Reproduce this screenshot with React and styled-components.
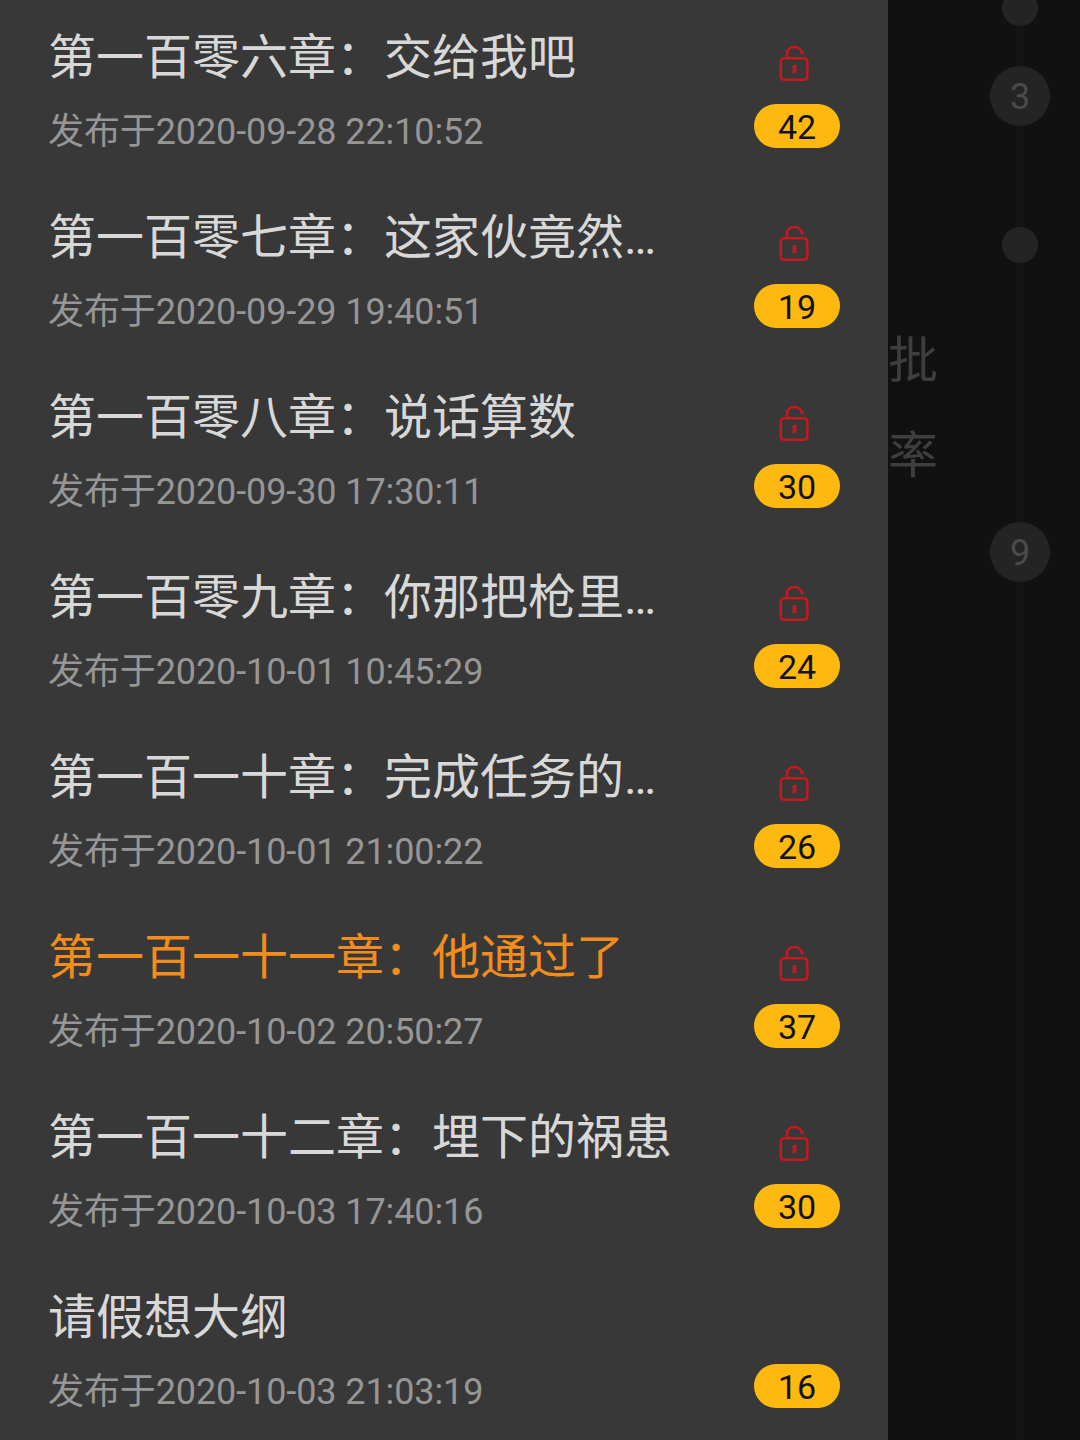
import React from 'react'
import styled, { createGlobalStyle } from 'styled-components'

const GlobalStyle = createGlobalStyle`
    html, body {
        margin: 0;
        padding: 0;
        background: #111111;
    }
`

const Page = styled.div`
    display: flex;
    width: 1080px;
    height: 1440px;
    overflow: hidden;
    background: #111111;
    font-family: Roboto, "Noto Sans CJK SC", sans-serif;
`

const Drawer = styled.div`
    flex: none;
    width: 888px;
    height: 1440px;
    overflow: hidden;
    background: #383838;
`

const ChapterList = styled.ul`
    list-style: none;
    margin: -32px 0 0;
    padding: 0;
`

const ChapterRow = styled.li`
    display: flex;
    align-items: stretch;
    justify-content: space-between;
    height: 180px;
    padding: 0 48px;
    box-sizing: border-box;
`

const ChapterText = styled.div`
    display: flex;
    flex-direction: column;
    padding-top: 54px;
`

const ChapterTitle = styled.div`
    font-size: 48px;
    line-height: 72px;
    white-space: nowrap;
    color: ${({ $current }) => ($current ? '#f28c1c' : '#d8d8d8')};
`

const ChapterDate = styled.div`
    margin-top: 16px;
    font-size: 36px;
    line-height: 44px;
    letter-spacing: -0.1px;
    white-space: nowrap;
    color: #969696;
`

const ChapterSide = styled.div`
    display: flex;
    flex-direction: column;
    align-items: center;
    justify-content: flex-end;
    width: 86px;
`

const LockIcon = styled.svg`
    display: block;
    width: 32px;
    height: 38px;
    margin: 0 7px 22px 0;
    fill: none;
    stroke: #c41a1e;
    stroke-width: 2.6;
`

const CoinBadge = styled.div`
    width: 86px;
    height: 44px;
    border-radius: 22px;
    background: #fdb90f;
    color: #111111;
    font-size: 34px;
    line-height: 47px;
    text-align: center;
`

const Backdrop = styled.div`
    flex: 1;
    display: flex;
    height: 1440px;
`

const LabelColumn = styled.div`
    flex: none;
    width: 102px;
    padding-top: 327px;
`

const StepLabel = styled.div`
    height: 95px;
    font-size: 50px;
    line-height: 68px;
    color: #3e3e3e;
`

const Track = styled.div`
    flex: none;
    width: 60px;
    display: flex;
    flex-direction: column;
    align-items: center;
    margin-top: -10px;
`

const Dot = styled.div`
    flex: none;
    width: ${({ $big }) => ($big ? 60 : 36)}px;
    height: ${({ $big }) => ($big ? 60 : 36)}px;
    border-radius: 50%;
    background: #242424;
    color: #4a4a4a;
    font-size: 36px;
    line-height: 62px;
    text-align: center;
`

const Connector = styled.div`
    flex: none;
    width: 8px;
    height: ${({ $h }) => $h}px;
    background: #141414;
`

const chapters = [
    { title: '第一百零六章：交给我吧', date: '2020-09-28 22:10:52', coins: 42 },
    { title: '第一百零七章：这家伙竟然…', date: '2020-09-29 19:40:51', coins: 19 },
    { title: '第一百零八章：说话算数', date: '2020-09-30 17:30:11', coins: 30 },
    { title: '第一百零九章：你那把枪里…', date: '2020-10-01 10:45:29', coins: 24 },
    { title: '第一百一十章：完成任务的…', date: '2020-10-01 21:00:22', coins: 26 },
    { title: '第一百一十一章：他通过了', date: '2020-10-02 20:50:27', coins: 37, current: true },
    { title: '第一百一十二章：埋下的祸患', date: '2020-10-03 17:40:16', coins: 30 },
    { title: '请假想大纲', date: '2020-10-03 21:03:19', coins: 16, free: true },
]

const OpenLock = () => (
    <LockIcon viewBox="0 0 32 38">
        <rect x="2.8" y="14.3" width="26.4" height="21.4" rx="3" />
        <path d="M9 13.5V9C9 5.5 12 3 16.5 3C20.5 3 23.5 6 24.5 10.5" />
        <rect x="14.5" y="21" width="4" height="8" fill="#c41a1e" stroke="none" />
    </LockIcon>
)

const App = () => (
    <Page>
        <GlobalStyle />
        <Drawer>
            <ChapterList>
                {chapters.map(item => (
                    <ChapterRow key={item.date}>
                        <ChapterText>
                            <ChapterTitle $current={item.current}>{item.title}</ChapterTitle>
                            <ChapterDate>发布于{item.date}</ChapterDate>
                        </ChapterText>
                        <ChapterSide>
                            {!item.free && <OpenLock />}
                            <CoinBadge>{item.coins}</CoinBadge>
                        </ChapterSide>
                    </ChapterRow>
                ))}
            </ChapterList>
        </Drawer>
        <Backdrop>
            <LabelColumn>
                <StepLabel>批</StepLabel>
                <StepLabel>率</StepLabel>
            </LabelColumn>
            <Track>
                <Dot />
                <Connector $h={40} />
                <Dot $big>3</Dot>
                <Connector $h={101} />
                <Dot />
                <Connector $h={259} />
                <Dot $big>9</Dot>
                <Connector $h={860} />
            </Track>
        </Backdrop>
    </Page>
)

export default App
